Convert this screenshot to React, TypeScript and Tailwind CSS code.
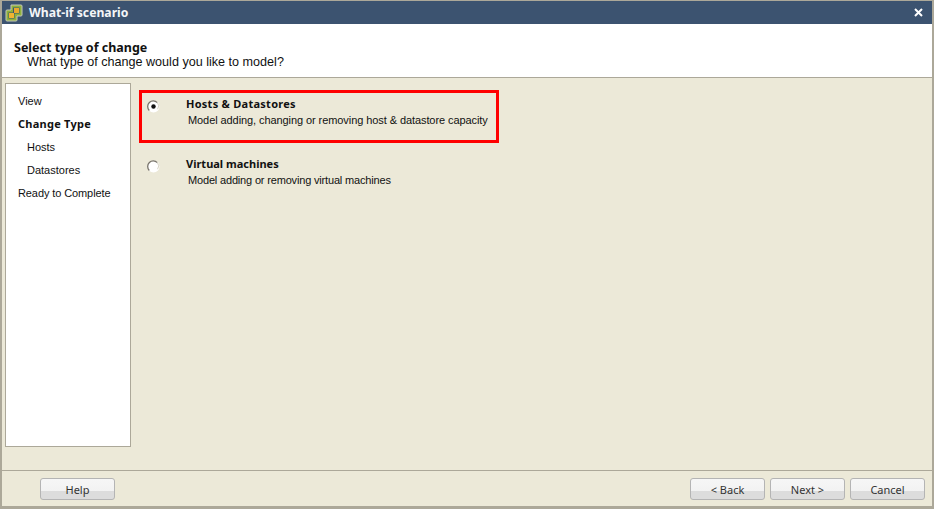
const body = "font-['Liberation_Sans',sans-serif]";
const bold = "font-['Noto_Sans',sans-serif] font-bold";

const WizardButton = ({ label }: { label: string }) => (
  <button className="relative w-[75px] h-[22px] rounded-[3px] border border-[#b4b4b4] bg-[linear-gradient(#f6f6f6_0,#f2f2f2_60%,#dcdcdc_60%,#dcdcdc_100%)] font-['Noto_Sans',sans-serif] text-[11px] leading-[22px] text-[#333]">
    {label}
  </button>
);

const Radio = ({ checked }: { checked?: boolean }) => (
  <svg width="13" height="13" viewBox="0 0 13 13" className="shrink-0">
    <circle cx="6.5" cy="6.5" r="6" fill="#fff" />
    <path d="M2.3 10.5a5 5 0 0 1 8-7.9" fill="none" stroke="#77736a" strokeWidth="1.3" />
    <path d="M10.3 2.6a5 5 0 0 1 .2 6.6" fill="none" stroke="#d8d4c4" strokeWidth="1" />
    {checked && <circle cx="6.5" cy="6.5" r="2.2" fill="#111" />}
  </svg>
);

const App = () => {
  return (
    <div className={`${body} w-[934px] h-[509px] flex flex-col bg-[#ece9d8] border-t border-l-2 border-r-2 border-b-[3px] border-[#aca899] text-[#111]`}>
      {/* Title bar */}
      <div className="h-[23px] shrink-0 flex items-center bg-[#3c5370] pl-[3px] pr-[9px]">
        <svg width="18" height="18" viewBox="0 0 18 18" className="shrink-0">
          <path d="M6 1h10a1 1 0 0 1 1 1v9a1 1 0 0 1-1 1h-4v4a1 1 0 0 1-1 1H2a1 1 0 0 1-1-1V7a1 1 0 0 1 1-1h4z" fill="#8fb03a" stroke="#c5c9b8" strokeWidth="1" />
          <rect x="8" y="3.5" width="6.5" height="6" fill="#3c5370" />
          <rect x="3.5" y="8.5" width="6" height="6" fill="#3c5370" />
          <rect x="9" y="4" width="5" height="5" fill="#e8a92c" />
          <rect x="4" y="9" width="5" height="5" fill="#f0b432" />
        </svg>
        <span className={`ml-[6px] pt-[2px] ${bold} text-[12.2px] text-[#f4f6f8]`}>What-if scenario</span>
        <svg width="9" height="9" viewBox="0 0 9 9" className="ml-auto">
          <path d="M1 1l7 7M8 1l-7 7" stroke="#fff" strokeWidth="2" />
        </svg>
      </div>

      {/* Header */}
      <div className="h-[54px] shrink-0 bg-white border-b border-[#aca899] pl-[12px] pt-[17px]">
        <div className={`${bold} text-[12.5px] leading-[14px]`}>Select type of change</div>
        <div className="pl-[13px] text-[12.6px] leading-[15px]">What type of change would you like to model?</div>
      </div>

      {/* Body */}
      <div className="flex-1 flex gap-[8px] pl-[3px] pt-[5px] pb-[23px] border-b border-[#aca899]">
        <div className="w-[126px] border border-[#aca899] bg-white pt-[6px] pl-[12px] text-[11px] leading-[23px]">
          <div>View</div>
          <div className={`${bold} -mt-px mb-px tracking-[0.25px]`}>Change Type</div>
          <div className="pl-[9px]">Hosts</div>
          <div className="pl-[9px]">Datastores</div>
          <div className="tracking-[-0.1px]">Ready to Complete</div>
        </div>
        <div className="pt-[7px]">
          <div className="w-[360px] h-[53px] border-[3px] border-[#f00] flex pl-[5px] pt-[3px]">
            <div className="pt-[4px]"><Radio checked /></div>
            <div className="pl-[26px]">
              <div className={`${bold} text-[11px] leading-[16px] tracking-[0.27px]`}>Hosts &amp; Datastores</div>
              <div className="pl-[2px] text-[11px] leading-[16px] tracking-[-0.08px]">Model adding, changing or removing host &amp; datastore capacity</div>
            </div>
          </div>
          <div className="flex pl-[8px] pt-[13px]">
            <div className="pt-[4px]"><Radio /></div>
            <div className="pl-[26px]">
              <div className={`${bold} text-[11px] leading-[16px]`}>Virtual machines</div>
              <div className="pl-[2px] text-[11px] leading-[16px] tracking-[-0.17px]">Model adding or removing virtual machines</div>
            </div>
          </div>
        </div>
      </div>

      {/* Footer */}
      <div className="h-[35px] shrink-0 flex items-start gap-[5px] pl-[38px] pr-[7px] pt-[7px]">
        <WizardButton label="Help" />
        <div className="flex-1" />
        <WizardButton label="< Back" />
        <WizardButton label="Next >" />
        <WizardButton label="Cancel" />
      </div>
    </div>
  );
};

export default App;
